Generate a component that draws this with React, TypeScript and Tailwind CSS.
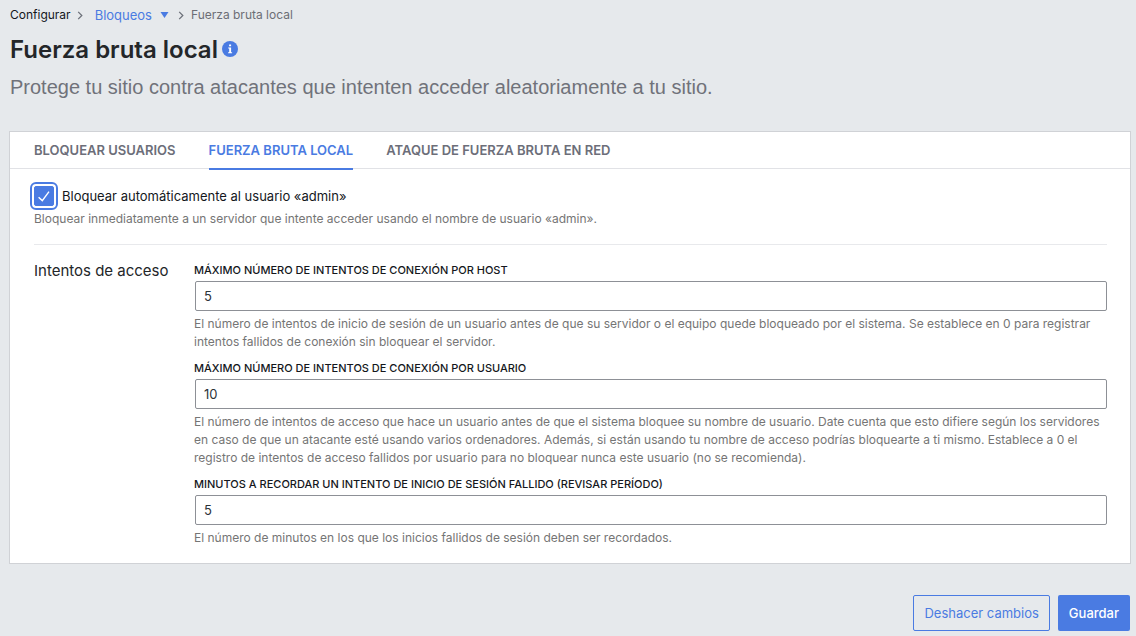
import { useState } from 'react';

const tabs = [
  { id: 'users', label: 'Bloquear usuarios' },
  { id: 'local', label: 'Fuerza bruta local' },
  { id: 'network', label: 'Ataque de fuerza bruta en red' },
];

const fields = [
  {
    id: 'host-attempts',
    label: 'Máximo número de intentos de conexión por host',
    value: '5',
    hint: 'El número de intentos de inicio de sesión de un usuario antes de que su servidor o el equipo quede bloqueado por el sistema. Se establece en 0 para registrar intentos fallidos de conexión sin bloquear el servidor.',
  },
  {
    id: 'user-attempts',
    label: 'Máximo número de intentos de conexión por usuario',
    value: '10',
    hint: 'El número de intentos de acceso que hace un usuario antes de que el sistema bloquee su nombre de usuario. Date cuenta que esto difiere según los servidores en caso de que un atacante esté usando varios ordenadores. Además, si están usando tu nombre de acceso podrías bloquearte a ti mismo. Establece a 0 el registro de intentos de acceso fallidos por usuario para no bloquear nunca este usuario (no se recomienda).',
  },
  {
    id: 'check-period',
    label: 'Minutos a recordar un intento de inicio de sesión fallido (revisar período)',
    value: '5',
    hint: 'El número de minutos en los que los inicios fallidos de sesión deben ser recordados.',
  },
];

function Chevron() {
  return (
    <svg viewBox="0 0 6 10" className="h-[9px] w-[6px]" fill="none" stroke="#6c7079" strokeWidth="1.4" aria-hidden="true">
      <path d="M1 1l4 4-4 4" />
    </svg>
  );
}

function Breadcrumb() {
  return (
    <nav className="flex h-[30px] items-center text-[12px] leading-[18px]">
      <a href="#configurar" className="text-[#14171c]">Configurar</a>
      <span className="mr-3 ml-[6px]"><Chevron /></span>
      <button type="button" className="flex items-center gap-2 text-[13px] text-[#4a7be2]">
        Bloqueos
        <svg viewBox="0 0 8 6" className="h-[6px] w-[9px]" aria-hidden="true">
          <path d="M0 0h8L4 6z" fill="#4a7be2" />
        </svg>
      </button>
      <span className="mr-[7px] ml-[9px]"><Chevron /></span>
      <span className="text-[#6c6e75]">Fuerza bruta local</span>
    </nav>
  );
}

export default function App() {
  const [active, setActive] = useState('local');
  const [banAdmin, setBanAdmin] = useState(true);

  return (
    <div className="min-h-screen bg-[#e6e9ec] pr-[5px] pl-[9px] font-['Inter','Liberation_Sans',sans-serif] text-[#14171c]">
      <header className="pl-px">
        <Breadcrumb />
        <div className="flex items-center gap-1">
          <h1 className="text-[24px] leading-[39px] font-semibold text-[#232629]">Fuerza bruta local</h1>
          <button type="button" aria-label="Información" className="pb-[2px]">
            <svg viewBox="0 0 16 16" className="size-4" aria-hidden="true">
              <circle cx="8" cy="8" r="8" fill="#4a7be2" />
              <path d="M7.1 3.4h2v1.8h-2zM6.2 6.4h2.9v4.8h1v1.1H6.1v-1.1h1.1V7.5h-1z" fill="#ffffff" />
            </svg>
          </button>
        </div>
        <p className="pt-1 font-['Liberation_Sans',sans-serif] text-[20px] leading-7 text-[#70727a]">
          Protege tu sitio contra atacantes que intenten acceder aleatoriamente a tu sitio.
        </p>
      </header>

      <main className="mt-[30px] border border-[#d0d2d6] bg-white">
        <div role="tablist" className="flex gap-[33px] border-b border-[#e1e2e6] px-6">
          {tabs.map((tab) => (
            <button
              key={tab.id}
              type="button"
              role="tab"
              aria-selected={tab.id === active}
              onClick={() => setActive(tab.id)}
              className={
                tab.id === active
                  ? '-mb-[2px] h-[38px] border-b-2 border-[#4a7be2] pt-[2px] text-[13px] font-semibold text-[#4a7be2] uppercase'
                  : '-mb-[2px] h-[38px] border-b-2 border-transparent pt-[2px] text-[13px] font-semibold text-[#6c6e79] uppercase'
              }
            >
              {tab.label}
            </button>
          ))}
        </div>

        <form className="pt-[17px] pr-[23px] pb-4 pl-6">
          <section className="border-b border-[#e8e9ec] pb-4">
            <div className="flex items-center gap-2">
              <span className="grid">
                <input
                  id="ban-admin"
                  type="checkbox"
                  checked={banAdmin}
                  onChange={(e) => setBanAdmin(e.target.checked)}
                  className="col-start-1 row-start-1 size-5 appearance-none rounded-[2px] border border-[#4a7be2] outline-2 outline-offset-2 outline-[#4a7be2] checked:bg-[#4a7be2]"
                />
                <svg viewBox="0 0 20 20" className="pointer-events-none col-start-1 row-start-1 size-5" fill="none" stroke="white" strokeWidth="1.4" aria-hidden="true">
                  <path d="M4.6 11.2l3.7 3.4 6.7-9" />
                </svg>
              </span>
              <label htmlFor="ban-admin" className="text-[13px] leading-5">
                Bloquear automáticamente al usuario «admin»
              </label>
            </div>
            <p className="pt-1 text-[12px] leading-[18px] text-[#757575]">
              Bloquear inmediatamente a un servidor que intente acceder usando el nombre de usuario «admin».
            </p>
          </section>

          <section className="flex pt-4">
            <h2 className="w-40 shrink-0 text-[15px] leading-5 text-[#232629]">Intentos de acceso</h2>
            <div className="flex min-w-0 flex-1 flex-col gap-2">
              {fields.map((field) => (
                <div key={field.id}>
                  <label htmlFor={field.id} className="block text-[11px] leading-[18px] font-medium uppercase">
                    {field.label}
                  </label>
                  <div className="pt-[2px] pl-px">
                    <input
                      id={field.id}
                      type="text"
                      inputMode="numeric"
                      defaultValue={field.value}
                      className="block h-[30px] w-full rounded-[2px] border border-[#8d9096] bg-white px-2 text-[13px] text-[#2c3338]"
                    />
                  </div>
                  <p className="pt-1 text-[12px] leading-[18px] text-[#757575]">{field.hint}</p>
                </div>
              ))}
            </div>
          </section>
        </form>
      </main>

      <footer className="flex justify-end gap-2 pt-[31px] pr-px pb-[5px]">
        <button type="button" className="h-9 rounded-[2px] border border-[#4a7be2] px-[10px] pt-[2px] text-[13px] text-[#4a7be2]">
          Deshacer cambios
        </button>
        <button type="button" className="h-9 rounded-[2px] bg-[#4a7be2] px-[11px] pt-[2px] text-[13px] font-medium text-white">
          Guardar
        </button>
      </footer>
    </div>
  );
}
